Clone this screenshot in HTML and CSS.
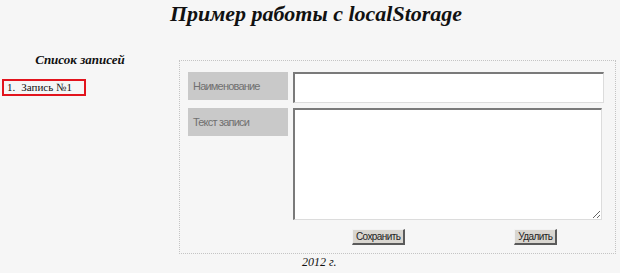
FILE: index.html
```html
<html>
<head>
    <title>Пример работы с localStorage</title>
    <link rel="stylesheet" href="styles.css">
</head>
<body>

<h1>Пример работы с localStorage</h1>

<div class='main'>
    <div class='side'>
        <h2>Список записей</h2>
        <ol class='notes'>
            <li>Запись №1</li>
        </ol>
    </div>
    <div class='editor'>
        <div class='label'>Наименование</div>
        <input type='text' class='field'>
        <div class='label'>Текст записи</div>
        <textarea class='field area'></textarea>
        <div class='buttons'>
            <button class='btn save'>Сохранить</button>
            <button class='btn'>Удалить</button>
        </div>
    </div>
</div>

<div class='footer'>2012 г.</div>

</body>
</html>
```

FILE: styles.css
```css
body {
    margin: 0;
    background: #f6f6f6;
    font-family: "Liberation Serif", serif;
    color: #111;
}

h1 {
    margin: 1px 0 0 12px;
    font-size: 22px;
    line-height: 25px;
    font-style: italic;
    text-align: center;
}

div.main {
    display: flex;
    align-items: flex-start;
}

div.side {
    width: 179px;
    flex: none;
}

div.side h2 {
    margin: 26px 0 0;
    width: 160px;
    font-size: 13px;
    line-height: 15px;
    font-style: italic;
    text-align: center;
}

ol.notes {
    margin: 12px 0 0 2px;
    padding: 0;
    list-style: none;
}

ol.notes li {
    width: 77px;
    height: 13px;
    padding: 0 0 0 3px;
    font-size: 11px;
    line-height: 13px;
    border: 2px solid #e2141d;
}

ol.notes li::before {
    content: counter(list-item) ".";
    margin-right: 6px;
}

div.editor {
    margin-top: 34px;
    width: 416px;
    padding: 11px 11px 8px 8px;
    border: 1px dotted #c4c4c4;
    display: grid;
    grid-template-columns: 100px 1fr;
    column-gap: 5px;
    row-gap: 5px;
}

div.label {
    height: 28px;
    line-height: 28px;
    padding-left: 5px;
    background: #c9c9c9;
    color: #707070;
    font-family: "Liberation Sans", sans-serif;
    font-size: 11px;
    letter-spacing: -0.8px;
}

.field {
    box-sizing: border-box;
    height: 31px;
    margin: 0;
    background: #fff;
    border-top: 2px solid #7a7a7a;
    border-left: 2px solid #7a7a7a;
    border-right: 1px solid #dcdcdc;
    border-bottom: 1px solid #dcdcdc;
    outline: none;
}

.field.area {
    width: calc(100% - 2px);
    height: 112px;
    resize: both;
}

div.buttons {
    grid-column: 2;
    display: flex;
    margin-top: 4px;
    padding-left: 59px;
}

.btn {
    box-sizing: border-box;
    height: 16px;
    padding: 0 3px;
    margin: 0;
    background: #d9d6d0;
    color: #222;
    font-family: "Liberation Sans", sans-serif;
    font-size: 10px;
    letter-spacing: -0.6px;
    border-top: 1px solid #f2f2f2;
    border-left: 1px solid #f2f2f2;
    border-right: 2px solid #5a5a5a;
    border-bottom: 2px solid #5a5a5a;
}

.btn.save {
    margin-right: 109px;
}

div.footer {
    margin: 1px 0 0 302px;
    font-size: 12px;
    line-height: 14px;
    font-style: italic;
}
```
